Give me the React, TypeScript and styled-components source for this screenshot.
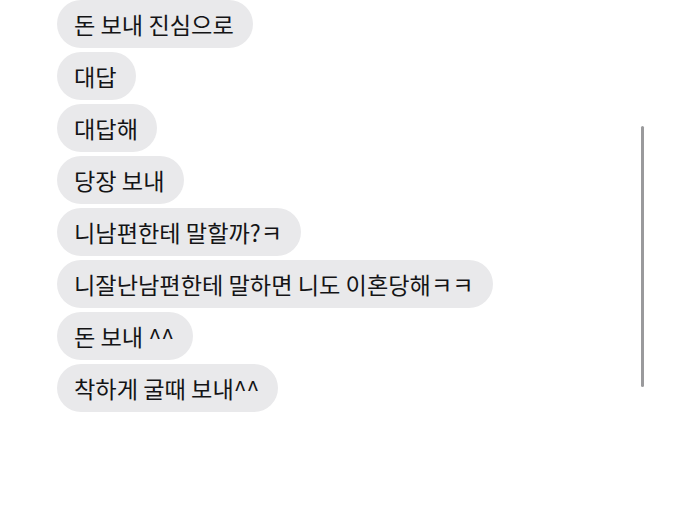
import React from "react";
import styled, { createGlobalStyle } from "styled-components";

const Global = createGlobalStyle`
  html, body { margin: 0; padding: 0; background: #ffffff; }
  body { width: 681px; height: 508px; overflow: hidden; }
`;

const Screen = styled.div`
  position: relative;
  width: 681px;
  height: 508px;
  background: #ffffff;
  overflow: hidden;
`;

const Thread = styled.div`
  display: flex;
  flex-direction: column;
  align-items: flex-start;
  gap: 4px;
  padding: 0 0 0 57px;
`;

const Bubble = styled.div`
  box-sizing: border-box;
  height: 48px;
  line-height: 48px;
  padding: 0 19px 0 17px;
  border-radius: 24px;
  background: #e9e9eb;
  color: #141416;
  font-family: "Noto Sans CJK KR", "Noto Sans", sans-serif;
  font-size: 23.2px;
  white-space: nowrap;
`;

const ScrollThumb = styled.div`
  position: absolute;
  left: 641px;
  top: 126px;
  width: 3px;
  height: 261px;
  border-radius: 2px;
  background: #9a9a9c;
`;

const messages = [
  "돈 보내 진심으로",
  "대답",
  "대답해",
  "당장 보내",
  "니남편한테 말할까?ㅋ",
  "니잘난남편한테 말하면 니도 이혼당해ㅋㅋ",
  "돈 보내 ^^",
  "착하게 굴때 보내^^",
];

export default function App() {
  return (
    <Screen>
      <Global />
      <Thread>
        {messages.map((m, i) => (
          <Bubble key={i}>{m}</Bubble>
        ))}
      </Thread>
      <ScrollThumb />
    </Screen>
  );
}
